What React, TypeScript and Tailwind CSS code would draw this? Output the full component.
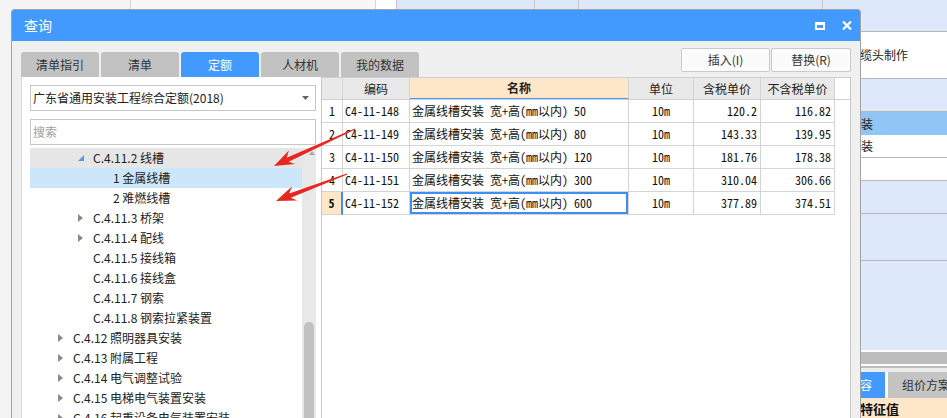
import React from "react";

type TreeNode = {
  level: 1 | 2 | 3;
  label: string;
  icon?: "open" | "closed";
  hover?: boolean;
  selected?: boolean;
};

const tree: TreeNode[] = [
  { level: 2, label: "C.4.11.2 线槽", icon: "open", hover: true },
  { level: 3, label: "1 金属线槽", selected: true },
  { level: 3, label: "2 难燃线槽" },
  { level: 2, label: "C.4.11.3 桥架", icon: "closed" },
  { level: 2, label: "C.4.11.4 配线", icon: "closed" },
  { level: 2, label: "C.4.11.5 接线箱" },
  { level: 2, label: "C.4.11.6 接线盒" },
  { level: 2, label: "C.4.11.7 钢索" },
  { level: 2, label: "C.4.11.8 钢索拉紧装置" },
  { level: 1, label: "C.4.12 照明器具安装", icon: "closed" },
  { level: 1, label: "C.4.13 附属工程", icon: "closed" },
  { level: 1, label: "C.4.14 电气调整试验", icon: "closed" },
  { level: 1, label: "C.4.15 电梯电气装置安装", icon: "closed" },
  { level: 1, label: "C.4.16 起重设备电气装置安装", icon: "closed" },
];

const rows = [
  { code: "C4-11-148", size: "50", tax: "120.2", noTax: "116.82" },
  { code: "C4-11-149", size: "80", tax: "143.33", noTax: "139.95" },
  { code: "C4-11-150", size: "120", tax: "181.76", noTax: "178.38" },
  { code: "C4-11-151", size: "300", tax: "310.04", noTax: "306.66" },
  { code: "C4-11-152", size: "600", tax: "377.89", noTax: "374.51" },
];

const tabs = ["清单指引", "清单", "定额", "人材机", "我的数据"];

const indent = { 1: "pl-[28px]", 2: "pl-[48px]", 3: "pl-[68px]" };

const mono = "font-['Noto_Sans_Mono_CJK_SC','Liberation_Mono','Noto_Sans_CJK_SC',monospace]";

function arrowPoints(tx: number, ty: number, hx: number, hy: number) {
  const len = Math.hypot(hx - tx, hy - ty);
  const ux = (hx - tx) / len;
  const uy = (hy - ty) / len;
  const nx = -uy;
  const ny = ux;
  const bx = hx - ux * 20;
  const by = hy - uy * 20;
  const nb = hx - ux * 15;
  const nby = hy - uy * 15;
  const p = (x: number, y: number) => `${x.toFixed(1)},${y.toFixed(1)}`;
  return [
    p(tx + nx * 0.6, ty + ny * 0.6),
    p(nb + nx * 2.2, nby + ny * 2.2),
    p(bx + nx * 8, by + ny * 8),
    p(hx, hy),
    p(bx - nx * 7, by - ny * 7),
    p(nb - nx * 2.2, nby - ny * 2.2),
    p(tx - nx * 0.6, ty - ny * 0.6),
  ].join(" ");
}

function TreeRow({ node }: { node: TreeNode }) {
  const bg = node.selected ? "bg-[#cce6fa] text-[#2f7fd8]" : node.hover ? "bg-[#e6e6e6]" : "";
  return (
    <div className={`flex h-[20px] shrink-0 items-center text-[12px] text-[#222] ${indent[node.level]} ${bg}`}>
      <span className="flex w-[15px] items-center">
        {node.icon === "closed" && (
          <svg width="5" height="8" viewBox="0 0 5 8">
            <polygon points="0,0 5,4 0,8" fill="#8a8a8a" />
          </svg>
        )}
        {node.icon === "open" && (
          <svg width="6" height="6" viewBox="0 0 6 6">
            <polygon points="6,0 6,6 0,6" fill="#5b98db" />
          </svg>
        )}
      </span>
      <span className="whitespace-nowrap">{node.label}</span>
    </div>
  );
}

function BgRow({ h, tone, text, textW, line = true }: { h: string; tone: string; text?: string; textW?: string; line?: boolean }) {
  return (
    <div className={`flex shrink-0 items-center ${h} ${tone} ${line ? "border-b border-[#b8b8b8]" : ""}`}>
      {text && <div className={`${textW} whitespace-nowrap text-right text-[12px] text-[#222]`}>{text}</div>}
    </div>
  );
}

export default function App() {
  return (
    <div className="relative h-[418px] w-[947px] overflow-hidden bg-white font-['Noto_Sans_CJK_SC','Noto_Sans',sans-serif]">
      {/* application behind the dialog */}
      <div className="flex h-full">
        <div className="w-[131px] border-r border-[#d6d6d6] bg-[#f4f4f4]" />
        <div className="w-[245px] border-r border-[#d6d6d6] bg-[#f7f7f7]" />
        <div className="w-[21px] border-r border-[#c8c8c8] bg-white" />
        <div className="flex flex-1 flex-col overflow-hidden">
          <div className="flex h-[32px] shrink-0 border-b border-[#b8b8b8] bg-[#dde9fb]">
            <div className="w-[138px] border-r border-[#c8c8c8]" />
            <div className="w-[44px] border-r border-[#c8c8c8]" />
            <div className="w-[244px] border-r border-[#c8c8c8]" />
          </div>
          <BgRow h="h-[47px]" tone="bg-white" text="电缆头制作" textW="w-[511px]" />
          <BgRow h="h-[33px]" tone="bg-[#dde9fb]" />
          <BgRow h="h-[23px]" tone="bg-[#90c5f5]" text="配管安装" textW="w-[476px]" line={false} />
          <BgRow h="h-[23px]" tone="bg-white" text="线槽安装" textW="w-[476px]" />
          <BgRow h="h-[23px]" tone="bg-white" />
          <BgRow h="h-[33px]" tone="bg-[#dde9fb]" />
          <BgRow h="h-[47px]" tone="bg-[#dde9fb]" />
          <div className="h-[89px] shrink-0 bg-[#dde9fb]" />
          <div className="h-[2px] shrink-0 bg-white" />
          <div className="h-[12px] shrink-0 bg-[#bdbdbd]" />
          <div className="h-[2px] shrink-0 bg-white" />
          <div className="h-[2px] shrink-0 bg-[#bdbdbd]" />
          <div className="h-[4px] shrink-0 bg-[#ececec]" />
          <div className="flex h-[26px] shrink-0 bg-[#ececec]">
            <div className="flex w-[488px] shrink-0 items-center justify-end bg-[#4299fe] pr-[13px] text-[12px] text-white">清单内容</div>
            <div className="w-[3px] shrink-0 bg-white" />
            <div className="flex flex-1 items-center whitespace-nowrap bg-[#c4c4c4] pl-[14px] text-[12px] text-[#333]">组价方案</div>
          </div>
          <div className="flex h-[21px] shrink-0 items-center bg-[#fde7c8] pl-[463px] text-[13px] font-bold text-[#111]">特征值</div>
        </div>
      </div>

      {/* query dialog */}
      <div className="absolute left-[11px] top-[9px] flex h-[420px] w-[850px] flex-col overflow-hidden rounded-t-[3px] border border-[#a2a2a2] bg-[#f0f0f0]">
        <div className="flex h-[31px] shrink-0 items-center bg-[#4299fe] pl-[12px] pr-[8px] text-white">
          <span className="text-[14px]">查询</span>
          <div className="ml-auto flex items-center gap-[17px]">
            <div className="h-[8px] w-[10px] border-[2px] border-t-[3px] border-white" />
            <svg width="10" height="9" viewBox="0 0 10 9">
              <path d="M1 0.5 L9 8.5 M9 0.5 L1 8.5" stroke="white" strokeWidth="2.2" />
            </svg>
          </div>
        </div>

        <div className="flex h-[36px] shrink-0 pl-[9px] pr-[9px]">
          <div className="flex items-end gap-[2px]">
            {tabs.map((t) => (
              <div
                key={t}
                className={`flex h-[25px] w-[78px] items-center justify-center rounded-t-[3px] text-[12px] ${
                  t === "定额" ? "bg-[#4299fe] text-white" : "bg-[#c2c2c2] text-[#333]"
                }`}
              >
                {t}
              </div>
            ))}
          </div>
          <div className="ml-auto mt-[7px] flex h-[24px] gap-[1px]">
            <button className="w-[89px] rounded-[2px] border border-[#c9c9c9] bg-[#fbfbfb] text-[12px] text-[#333]">插入(I)</button>
            <button className="w-[80px] rounded-[2px] border border-[#c9c9c9] bg-[#fbfbfb] text-[12px] text-[#333]">替换(R)</button>
          </div>
        </div>

        <div className="flex min-h-0 flex-1 pl-[9px] pr-[9px]">
          {/* left: tree */}
          <div className="flex w-[300px] flex-col overflow-hidden border-l border-[#dadada] bg-white pl-[8px] pr-[5px]">
            <div className="mt-[8px] flex h-[26px] shrink-0 items-center border border-[#c6c6c6] pl-[2px] pr-[6px] text-[12px] text-[#222]">
              <span>广东省通用安装工程综合定额(2018)</span>
              <svg className="ml-auto" width="7" height="4" viewBox="0 0 7 4">
                <polygon points="0,0 7,0 3.5,4" fill="#666" />
              </svg>
            </div>
            <div className="mt-[8px] flex h-[26px] shrink-0 items-center border border-[#c6c6c6] pl-[2px] text-[12px] text-[#a0a0a0]">搜索</div>
            <div className="mt-[3px] flex min-h-0 flex-1">
              <div className="flex flex-1 flex-col">
                {tree.map((n) => (
                  <TreeRow key={n.label} node={n} />
                ))}
              </div>
              <div className="flex w-[14px] flex-col items-center bg-[#e8e8e8]">
                <svg className="ml-[6px] mt-[3px] shrink-0" width="6" height="4" viewBox="0 0 6 4">
                  <polygon points="0,4 3,0 6,4" fill="#a8a8a8" />
                </svg>
                <div className="mt-[167px] h-[120px] w-[10px] shrink-0 rounded-t-full bg-[#c1c1c1]" />
              </div>
            </div>
          </div>

          {/* right: quota table */}
          <div className="flex-1 border-l border-r border-[#c8c8c8] bg-white">
            <div className="flex h-[23px] border-b border-t border-[#cfcfcf] text-[12px] text-[#222]">
              <div className="w-[21px] border-r border-[#d4d4d4] bg-[#e9e9e9]" />
              <div className="flex w-[67px] items-center justify-center border-r border-[#d4d4d4] bg-[#e9e9e9]">编码</div>
              <div className="flex w-[219px] items-center justify-center border-b-[1px] border-r border-b-[#4a9cf5] border-r-[#d4d4d4] bg-[#fee7c9] font-bold">名称</div>
              <div className="flex w-[65px] items-center justify-center border-r border-[#d4d4d4] bg-[#e9e9e9]">单位</div>
              <div className="flex w-[67px] items-center justify-center border-r border-[#d4d4d4] bg-[#e9e9e9]">含税单价</div>
              <div className="flex w-[74px] items-center justify-center border-r border-[#d4d4d4] bg-[#e9e9e9]">不含税单价</div>
            </div>
            {rows.map((r, i) => {
              const cur = i === 4;
              return (
                <div key={r.code} className={`flex h-[23px] text-[12px] text-[#111] ${mono}`}>
                  <div
                    className={`flex w-[21px] items-center justify-center border-b border-[#d4d4d4] ${
                      cur ? "border-r-2 border-r-[#3e8ff2] bg-[#fee7c9] font-bold" : "border-r"
                    }`}
                  >
                    {i + 1}
                  </div>
                  <div className="flex w-[67px] items-center border-b border-r border-[#d4d4d4] pl-[2px]">{r.code}</div>
                  <div
                    className={`flex w-[219px] items-center whitespace-nowrap border-b border-r border-[#d4d4d4] pl-[2px] ${
                      cur ? "shadow-[inset_0_0_0_2px_#3e8ff2]" : ""
                    }`}
                  >
                    金属线槽安装 宽+高(mm以内) {r.size}
                  </div>
                  <div className="flex w-[65px] items-center justify-center border-b border-r border-[#d4d4d4]">10m</div>
                  <div className="flex w-[67px] items-center justify-end border-b border-r border-[#d4d4d4] pr-[3px]">{r.tax}</div>
                  <div className="flex w-[74px] items-center justify-end border-b border-r border-[#d4d4d4] pr-[3px]">{r.noTax}</div>
                </div>
              );
            })}
          </div>
        </div>
      </div>

      {/* red annotation arrows */}
      <svg className="pointer-events-none absolute left-0 top-0" width="947" height="418">
        <polygon points={arrowPoints(355, 129, 274, 166)} fill="#e8261f" />
        <polygon points={arrowPoints(347, 174, 276, 201)} fill="#e8261f" />
      </svg>
    </div>
  );
}
